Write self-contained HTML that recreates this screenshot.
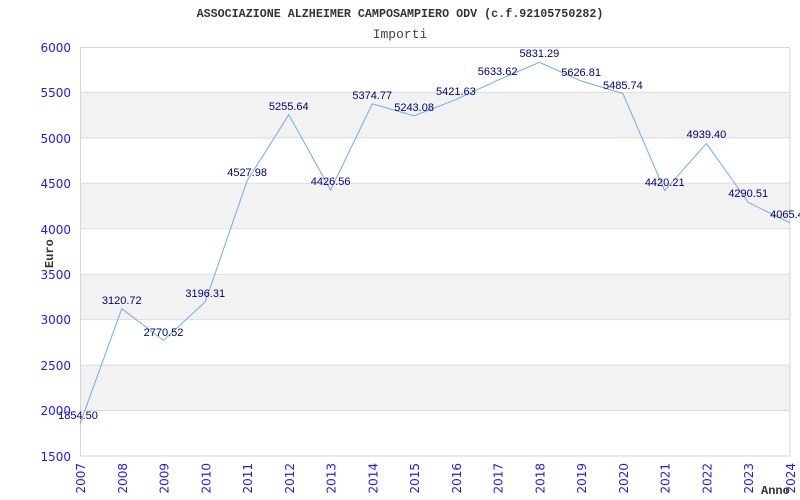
<!DOCTYPE html>
<html><head><style>body{margin:0;background:#fff}svg{display:block}</style></head><body>
<svg width="800" height="500" xmlns="http://www.w3.org/2000/svg">
<rect width="800" height="500" fill="#fff"/>
<g fill="#f2f2f2">
<rect x="80" y="92.4" width="710" height="45.4"/>
<rect x="80" y="183.3" width="710" height="45.4"/>
<rect x="80" y="274.2" width="710" height="45.4"/>
<rect x="80" y="365.1" width="710" height="45.4"/>
</g>
<g stroke="#dcdcdc" stroke-width="1">
<line x1="80" y1="92.4" x2="790" y2="92.4"/>
<line x1="80" y1="137.9" x2="790" y2="137.9"/>
<line x1="80" y1="183.3" x2="790" y2="183.3"/>
<line x1="80" y1="228.8" x2="790" y2="228.8"/>
<line x1="80" y1="274.2" x2="790" y2="274.2"/>
<line x1="80" y1="319.6" x2="790" y2="319.6"/>
<line x1="80" y1="365.1" x2="790" y2="365.1"/>
<line x1="80" y1="410.5" x2="790" y2="410.5"/>
</g>
<rect x="80.5" y="47.5" width="709.5" height="408.5" fill="none" stroke="#d6d6d6"/>
<polyline fill="none" stroke="#6aaef0" stroke-width="1" points="80,423.8 121.8,308.7 163.5,340.5 205.3,301.8 247.1,180.8 288.8,114.7 330.6,190 372.3,103.8 414.1,115.8 455.9,99.6 497.6,80.3 539.4,62.3 581.1,80.9 622.9,93.7 664.7,190.6 706.4,143.4 748.2,202.4 790,222.8"/>
<g font-family="Liberation Sans, sans-serif" font-size="11" fill="#000080" text-anchor="middle">
<text x="78" y="419">1854.50</text>
<text x="121.8" y="304">3120.72</text>
<text x="163.5" y="336">2770.52</text>
<text x="205.3" y="297">3196.31</text>
<text x="247.1" y="176">4527.98</text>
<text x="288.8" y="110">5255.64</text>
<text x="330.6" y="185">4426.56</text>
<text x="372.3" y="99">5374.77</text>
<text x="414.1" y="111">5243.08</text>
<text x="455.9" y="95">5421.63</text>
<text x="497.6" y="75">5633.62</text>
<text x="539.4" y="57">5831.29</text>
<text x="581.1" y="76">5626.81</text>
<text x="622.9" y="89">5485.74</text>
<text x="664.7" y="186">4420.21</text>
<text x="706.4" y="138">4939.40</text>
<text x="748.2" y="197">4290.51</text>
<text x="790" y="218">4065.40</text>
</g>
<g font-family="DejaVu Sans, sans-serif" font-size="12" fill="#1a1aff" text-anchor="end">
<text x="71" y="52">6000</text>
<text x="71" y="97">5500</text>
<text x="71" y="143">5000</text>
<text x="71" y="188">4500</text>
<text x="71" y="234">4000</text>
<text x="71" y="279">3500</text>
<text x="71" y="324">3000</text>
<text x="71" y="370">2500</text>
<text x="71" y="415">2000</text>
<text x="71" y="461">1500</text>
</g>
<g font-family="DejaVu Sans, sans-serif" font-size="12" fill="#1a1aff" text-anchor="end">
<text transform="translate(85,463) rotate(-90)">2007</text>
<text transform="translate(126.8,463) rotate(-90)">2008</text>
<text transform="translate(168.5,463) rotate(-90)">2009</text>
<text transform="translate(210.3,463) rotate(-90)">2010</text>
<text transform="translate(252.1,463) rotate(-90)">2011</text>
<text transform="translate(293.8,463) rotate(-90)">2012</text>
<text transform="translate(335.6,463) rotate(-90)">2013</text>
<text transform="translate(377.3,463) rotate(-90)">2014</text>
<text transform="translate(419.1,463) rotate(-90)">2015</text>
<text transform="translate(460.9,463) rotate(-90)">2016</text>
<text transform="translate(502.6,463) rotate(-90)">2017</text>
<text transform="translate(544.4,463) rotate(-90)">2018</text>
<text transform="translate(586.1,463) rotate(-90)">2019</text>
<text transform="translate(627.9,463) rotate(-90)">2020</text>
<text transform="translate(669.7,463) rotate(-90)">2021</text>
<text transform="translate(711.4,463) rotate(-90)">2022</text>
<text transform="translate(753.2,463) rotate(-90)">2023</text>
<text transform="translate(795,463) rotate(-90)">2024</text>
</g>
<text x="400" y="17" font-family="Liberation Mono, monospace" font-size="11.7" font-weight="bold" fill="#333" text-anchor="middle">ASSOCIAZIONE ALZHEIMER CAMPOSAMPIERO ODV (c.f.92105750282)</text>
<text x="400" y="38" font-family="Liberation Mono, monospace" font-size="13" fill="#444" text-anchor="middle">Importi</text>
<text transform="translate(53,268) rotate(-90)" font-family="Liberation Mono, monospace" font-size="12" font-weight="bold" fill="#333">Euro</text>
<text x="761" y="494" font-family="Liberation Mono, monospace" font-size="12" font-weight="bold" fill="#333">Anno</text>
</svg>
</body></html>
